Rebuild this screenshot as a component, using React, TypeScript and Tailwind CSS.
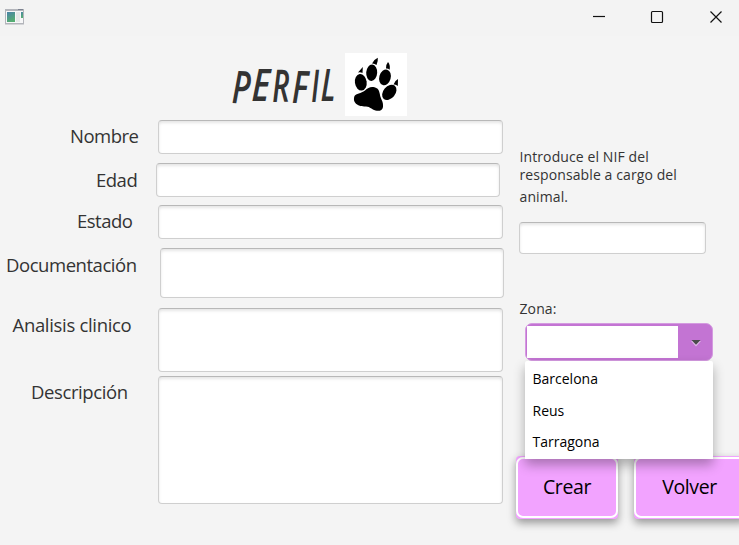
import React from "react";

type FieldRowProps = {
  label: string;
  row: string;
  labelBox: string;
  field: string;
};

const inset =
  "rounded-[4px] border border-[#cfcfcf] border-t-[#b8b8b8] bg-white shadow-[inset_0_2px_3px_rgba(0,0,0,0.10)]";

function FieldRow({ label, row, labelBox, field }: FieldRowProps) {
  return (
    <div className={`flex items-start ${row}`}>
      <div className={`shrink-0 whitespace-nowrap text-[18.5px] leading-[26px] ${labelBox}`}>{label}</div>
      <div className={`shrink-0 ${inset} ${field}`} />
    </div>
  );
}

function AppIcon() {
  return (
    <svg width="20" height="17" viewBox="0 0 20 17">
      <defs>
        <linearGradient id="pane" x1="0" y1="0" x2="0.4" y2="1">
          <stop offset="0" stopColor="#4a83a8" />
          <stop offset="1" stopColor="#55ad72" />
        </linearGradient>
      </defs>
      <rect x="0" y="0" width="19" height="15.5" fill="#b3b5bb" />
      <rect x="13" y="0" width="5" height="1" fill="#7c8290" />
      <rect x="1" y="2" width="17" height="12" fill="#f7f7f8" />
      <rect x="2" y="3" width="8" height="10" fill="url(#pane)" />
      <rect x="11" y="3" width="4" height="10" fill="#e6e8e8" />
      <rect x="16" y="3" width="2" height="6" fill="url(#pane)" />
    </svg>
  );
}

function Paw() {
  return (
    <svg width="62" height="63" viewBox="0 0 62 63" className="bg-white">
      <g fill="#000">
        <ellipse cx="15.8" cy="29.3" rx="5.9" ry="8.3" transform="rotate(-8 15.8 29.3)" />
        <ellipse cx="26.7" cy="19.7" rx="5.5" ry="8.2" transform="rotate(4 26.7 19.7)" />
        <ellipse cx="40" cy="24.4" rx="5.7" ry="8" transform="rotate(16 40 24.4)" />
        <ellipse cx="44.3" cy="39.4" rx="6" ry="8.6" transform="rotate(40 44.3 39.4)" />
        <path d="M13 19.5 L17.8 14 L17.5 20 Q15.5 18.8 13 19.5Z" />
        <path d="M27 10.5 Q29 6.5 32.8 4.8 Q33.2 8.5 31.5 12 Q29.5 10.3 27 10.5Z" />
        <path d="M41 15.5 Q40.8 11.5 43 9 Q45.5 12 44.7 16.7 Q43 15.2 41 15.5Z" />
        <path d="M48.5 31.5 Q50 27.5 53 26 L52.8 33 Q51 31 48.5 31.5Z" />
        <path d="M9.5 43 C11 40.5 16 40.5 20 37.5 C23 34.5 26 33.3 29.5 34.3 C35 35.5 34.5 41 35.5 44 C36.5 47 38.5 49 38 54 C37.5 57.5 34 58.5 30.5 57.5 C26.5 56.5 25.5 53.8 21 53.5 C16.5 53.5 12.5 53 10 49.5 C8.5 47.5 8.8 45 9.5 43Z" />
      </g>
    </svg>
  );
}

// Each capital gets its own width and tilt for the uneven hand-lettered title.
const title = [
  { ch: "P", box: "w-[20px]", tilt: "scale-x-[0.70] rotate-[2deg] translate-y-[1px]" },
  { ch: "E", box: "w-[20px]", tilt: "scale-x-[0.76] skew-x-[-3deg] translate-y-[-1px]" },
  { ch: "R", box: "w-[20px]", tilt: "scale-x-[0.66] rotate-[-1deg]" },
  { ch: "F", box: "w-[19px]", tilt: "scale-x-[0.70] rotate-[1deg] translate-y-[1px]" },
  { ch: "I", box: "w-[9.5px]", tilt: "scale-x-[0.62] rotate-[-1deg]" },
  { ch: "L", box: "w-[14px]", tilt: "scale-x-[0.66] skew-x-[-2deg] translate-y-[-1px]" },
];

const option = "h-[31.5px] pl-[7.5px] text-[14px] leading-[31.5px] text-black";
const button = "h-[63px] shrink-0 rounded-[4px] bg-[#f2a3ff] py-px shadow-[0_4px_9px_rgba(0,0,0,0.38)]";
const buttonFace =
  "h-full rounded-[7px] border-[2px] border-white text-center text-[19.5px] leading-[56px] tracking-[-0.4px] text-black";

export default function App() {
  return (
    <div className="relative h-[545px] w-[739px] overflow-hidden bg-[#f4f4f4] font-['Open_Sans','Noto_Sans',sans-serif] text-[#333333]">
      <header className="flex h-9 items-start justify-between bg-[#f3f3f3] pl-[5px]">
        <div className="pt-[9px]">
          <AppIcon />
        </div>
        <svg width="147" height="32" viewBox="0 0 147 32" fill="none" stroke="#111" strokeWidth="1.2">
          <path d="M1 16.5H13" />
          <rect x="59.5" y="11.5" width="11" height="11" rx="1" />
          <path d="M118.5 11.5L129.5 22.5M129.5 11.5L118.5 22.5" />
        </svg>
      </header>
      <main className="flex">
        <section className="w-[504px] shrink-0">
          <div className="flex h-[84px] items-start pt-[17px]">
            <h1 className="flex h-[63px] w-[345px] pl-[232px] font-['Open_Sans',sans-serif] text-[45px] font-semibold leading-[64px] italic">
              {title.map((t) => (
                <span key={t.ch} className={`shrink-0 ${t.box}`}>
                  <span className={`inline-block origin-left ${t.tilt}`}>{t.ch}</span>
                </span>
              ))}
            </h1>
            <Paw />
          </div>
          <FieldRow label="Nombre" row="h-[43px]" labelBox="w-[158px] pl-[70px] pt-[3px] tracking-[-0.5px]" field="h-[34px] w-[345px]" />
          <FieldRow label="Edad" row="h-[42px]" labelBox="w-[156px] pl-[96px] pt-[4px] tracking-[-0.5px]" field="h-[34px] w-[344px]" />
          <FieldRow label="Estado" row="h-[43px]" labelBox="w-[158px] pl-[77px] pt-[3px] tracking-[-0.5px]" field="h-[34px] w-[345px]" />
          <FieldRow label="Documentación" row="h-[60px]" labelBox="w-[160px] pl-[6px] pt-[4px] tracking-[-0.45px]" field="h-[50px] w-[344px]" />
          <FieldRow label="Analisis clinico" row="h-[68px]" labelBox="w-[158px] pl-[12.5px] pt-[4px] tracking-[-0.32px]" field="h-[64px] w-[345px]" />
          <FieldRow label="Descripción" row="h-[129px]" labelBox="w-[158px] pl-[31px] pt-[3px] tracking-[-0.4px]" field="h-[128px] w-[345px]" />
        </section>
        <aside className="w-[235px] shrink-0 pl-[12px]">
          <div className="h-[186px] pl-[3.5px] pt-[112px] text-[14px] leading-[18px] tracking-[0.1px]">
            <p className="whitespace-nowrap">Introduce el NIF del</p>
            <p className="whitespace-nowrap">responsable a cargo del</p>
            <p className="whitespace-nowrap pt-[4px]">animal.</p>
          </div>
          <div className={`ml-[3px] h-[32px] w-[187px] ${inset}`} />
          <p className="ml-[3.5px] mt-[46px] h-[23px] text-[14px] leading-[18px] tracking-[0.1px]">Zona:</p>
          <div className="relative ml-[9px] h-[38px] w-[188px]">
            <div className="flex h-[38px] rounded-[7px] border border-[#d49ae0] bg-[#c374d3] py-[2px] pl-px">
              <div className="w-[151px] bg-white" />
              <div className="flex flex-1 items-center justify-center pl-px pt-[2px]">
                <svg width="10" height="8" viewBox="0 0 10 8">
                  <path d="M0 2H10L5 7.5Z" fill="#e1b9e9" />
                  <path d="M0.5 1H9.5L5 5.8Z" fill="#4b4b4b" />
                </svg>
              </div>
            </div>
            <div className="absolute left-0 top-[38px] z-10 h-[98px] w-[188px] rounded-t-[2px] bg-white pt-[2px] shadow-[0_6px_12px_rgba(0,0,0,0.3)]">
              <div className={option}>Barcelona</div>
              <div className={option}>Reus</div>
              <div className={option}>Tarragona</div>
            </div>
          </div>
          <div className="mt-[95px] flex gap-[15.5px]">
            <div className={`w-[102px] ${button}`}>
              <div className={buttonFace}>Crear</div>
            </div>
            <div className={`w-[112px] ${button}`}>
              <div className={buttonFace}>Volver</div>
            </div>
          </div>
        </aside>
      </main>
    </div>
  );
}
